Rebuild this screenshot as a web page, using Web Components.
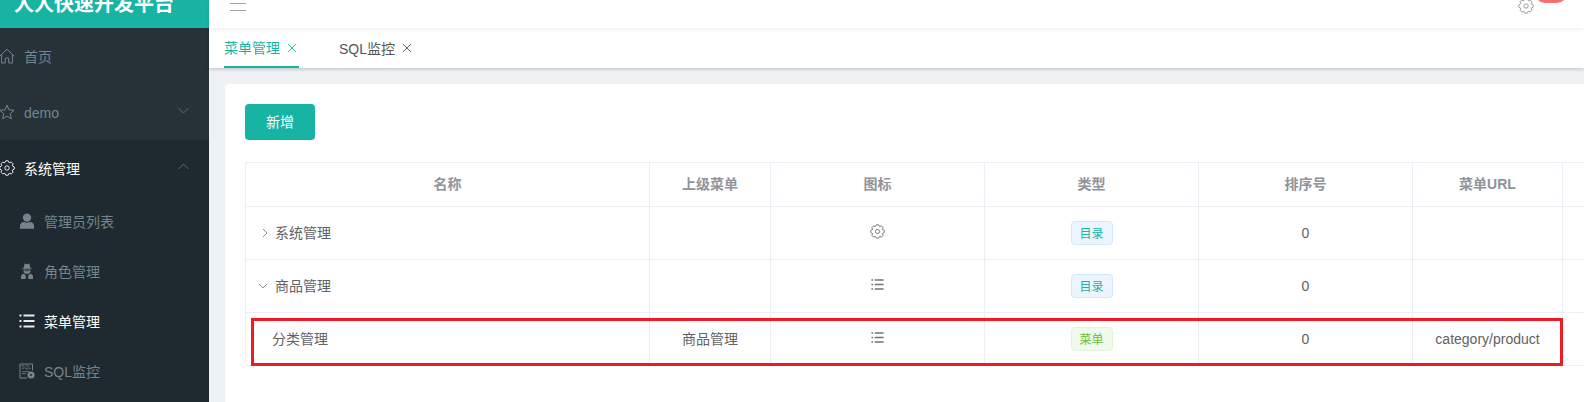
<!DOCTYPE html>
<html>
<head>
<meta charset="utf-8">
<style>
    html, body { margin: 0; height: 100%; overflow: hidden; background: #fff; }
    body { font-family: "Liberation Sans", "Noto Sans CJK SC", sans-serif; font-size: 14px; }
</style>
</head>
<body>
<app-shell>
    <side-nav slot="side">
        <nav-item icon="home" top>首页</nav-item>
        <nav-item icon="star" arrow="down" top chevron latin>demo</nav-item>
        <nav-group>
            <nav-item icon="gear" arrow="up" top chevron active>系统管理</nav-item>
            <nav-item icon="user">管理员列表</nav-item>
            <nav-item icon="spy">角色管理</nav-item>
            <nav-item icon="list" active>菜单管理</nav-item>
            <nav-item icon="sql">SQL监控</nav-item>
        </nav-group>
    </side-nav>
    <top-bar slot="top"></top-bar>
    <tab-bar slot="tabs">
        <tab-item active>菜单管理</tab-item>
        <tab-item>SQL监控</tab-item>
    </tab-bar>
    <content-card slot="main">
        <add-button>新增</add-button>
        <menu-table></menu-table>
    </content-card>
</app-shell>

<script>
function gearPath() {
    // eight soft lobes round a 16 box
    let d = '';
    const pt = (r, a) => (8 + r * Math.cos(a)).toFixed(2) + ' ' + (8 + r * Math.sin(a)).toFixed(2);
    for (let i = 0; i < 8; i++) {
        const a = (i * Math.PI) / 4 - Math.PI / 8;
        const step = Math.PI / 4;
        if (i === 0) d += 'M' + pt(5.7, a);
        d += ' L' + pt(7.3, a + step * 0.3) + ' L' + pt(7.3, a + step * 0.7) + ' L' + pt(5.7, a + step);
    }
    return d + 'Z';
}

const ICONS = {
    home: '<path d="M.8 8 8 1.2 15.2 8M2.6 6.6V15H6.3V10H9.7V15H13.4V6.6" fill="none" stroke="currentColor"/>',
    star: '<path d="M8 1.2 10 5.8 15 6.3 11.2 9.7 12.3 14.8 8 12.1 3.7 14.8 4.8 9.7 1 6.3 6 5.8Z" fill="none" stroke="currentColor"/>',
    gear: '<path d="' + gearPath() + '" fill="none" stroke="currentColor" stroke-linejoin="round"/><circle cx="8" cy="8" r="2.2" fill="none" stroke="currentColor"/>',
    user: '<circle cx="8" cy="4.6" r="4.2" fill="currentColor"/><path d="M1 15.8V12.6C1 10.4 3 9 5 8.9 6.7 10 9.3 10 11 8.9 13 9 15 10.4 15 12.6V15.8Z" fill="currentColor"/>',
    spy: '<path d="M4.8 4.6 5.6 .6 8 1.3 10.4 .6 11.2 4.6 13.4 5.8H2.6Z" fill="currentColor"/><path d="M4.6 6.6H11.4V8.6C11.4 10 10 11 8 11S4.6 10 4.6 8.6Z" fill="currentColor"/><path d="M2 16V13.4C2 12 3.4 11 5 10.8L7 13 6.5 16ZM14 16V13.4C14 12 12.6 11 11 10.8L9 13 9.5 16Z" fill="currentColor"/><path d="M5.6 7.6H10.4" stroke="#1f2a30" stroke-width=".8"/>',
    list: '<path d="M.5 2.5H2.5M4.5 2.5H15.5M.5 8H2.5M4.5 8H15.5M.5 13.5H2.5M4.5 13.5H15.5" stroke="currentColor" stroke-width="2"/>',
    sql: '<path d="M13.5 7.5V1H1V15H8" fill="none" stroke="currentColor"/><path d="M3 8.6H10.5M3 10.6H7" stroke="currentColor" stroke-width=".8"/><text x="2.6" y="6.4" font-size="4.6" font-family="Liberation Sans" fill="currentColor">SQL</text><circle cx="12" cy="12" r="3.6" fill="currentColor"/><circle cx="12" cy="12" r="1" fill="#1f2a30"/>'
};

class UiIcon extends HTMLElement {
    constructor() {
        super();
        const size = this.getAttribute('size') || 16;
        this.attachShadow({ mode: 'open' }).innerHTML = `
            <style>:host { display: inline-flex; flex: none; } svg { display: block; }</style>
            <svg width="${size}" height="${size}" viewBox="0 0 16 16">${ICONS[this.getAttribute('name')]}</svg>`;
    }
}
customElements.define('ui-icon', UiIcon);

const shellTemplate = document.createElement('template');
shellTemplate.innerHTML = `
<style>
    :host {
        display: grid;
        grid-template-columns: 209px 1fr;
        grid-template-rows: 28px 40px 1fr;
        height: 402px;
        overflow: hidden;
        background: #eef2f4;
    }
    .side { grid-row: 1 / 4; min-height: 0; }
    .top { position: relative; z-index: 2; box-shadow: 0 2px 4px rgba(0, 0, 0, .06); }
    .tabs { position: relative; z-index: 1; box-shadow: 0 1px 4px rgba(0, 0, 0, .22); }
    .main { min-width: 0; min-height: 0; padding: 16px 0 0 16px; }
</style>
<div class="side"><slot name="side"></slot></div>
<div class="top"><slot name="top"></slot></div>
<div class="tabs"><slot name="tabs"></slot></div>
<div class="main"><slot name="main"></slot></div>
`;
class AppShell extends HTMLElement {
    constructor() {
        super();
        this.attachShadow({ mode: 'open' }).append(shellTemplate.content.cloneNode(true));
    }
}
customElements.define('app-shell', AppShell);

const sideTemplate = document.createElement('template');
sideTemplate.innerHTML = `
<style>
    :host { display: flex; flex-direction: column; height: 100%; background: #263238; }
    .logo {
        height: 28px;
        flex: none;
        overflow: hidden;
        background: #17b3a3;
        color: #fff;
        font-size: 20px;
        font-weight: bold;
        line-height: 20px;
        padding-left: 14px;
        box-sizing: border-box;
    }
    .logo span { display: block; margin-top: -6px; white-space: nowrap; }
</style>
<div class="logo"><span>人人快速开发平台</span></div>
<slot></slot>
`;
class SideNav extends HTMLElement {
    constructor() {
        super();
        this.attachShadow({ mode: 'open' }).append(sideTemplate.content.cloneNode(true));
    }
}
customElements.define('side-nav', SideNav);

class NavGroup extends HTMLElement {
    constructor() {
        super();
        this.attachShadow({ mode: 'open' }).innerHTML = `
            <style>:host { display: block; flex: 1; background: #1f2a30; }</style><slot></slot>`;
    }
}
customElements.define('nav-group', NavGroup);

class NavItem extends HTMLElement {
    constructor() {
        super();
        const chevron = this.hasAttribute('chevron');
        const up = this.getAttribute('arrow') === 'up';
        this.attachShadow({ mode: 'open' }).innerHTML = `
            <style>
                :host {
                    display: flex;
                    align-items: center;
                    height: 50px;
                    padding-left: 20px;
                    color: #75838b;
                    font-size: 14px;
                }
                :host([top]) { height: 56px; padding-left: 0; }
                :host([active]) { color: #fff; }
                .icon { display: flex; width: 24px; flex: none; color: #75838b; }
                .icon ui-icon { margin-left: -1px; }
                :host([active]) .icon { color: #e8eaeb; }
                .label { flex: 1; }
                :host([latin]) .label { padding-top: 2px; }
                .chev { margin: -4px 20px 0 0; color: #5d6a72; }
            </style>
            <span class="icon"><ui-icon name="${this.getAttribute('icon')}" size="16"></ui-icon></span>
            <span class="label"><slot></slot></span>
            ${chevron ? `<svg class="chev" width="11" height="7" viewBox="0 0 11 7"><path d="${up ? 'M.5 6 5.5 1 10.5 6' : 'M.5 1 5.5 6 10.5 1'}" fill="none" stroke="currentColor"/></svg>` : ''}`;
    }
}
customElements.define('nav-item', NavItem);

class TopBar extends HTMLElement {
    constructor() {
        super();
        this.attachShadow({ mode: 'open' }).innerHTML = `
            <style>
                :host {
                    display: flex;
                    justify-content: space-between;
                    height: 28px;
                    overflow: hidden;
                    background: #fff;
                    position: relative;
                }
                .burger { display: block; margin-left: 21px; }
                .gear { margin: -2px 50px 0 0; color: #9a9ea3; height: 16px; }
                .badge {
                    position: absolute;
                    right: 17px;
                    top: -17px;
                    width: 32px;
                    height: 20px;
                    border-radius: 10px;
                    background: #f76f6f;
                }
            </style>
            <svg class="burger" width="16" height="14" viewBox="0 0 16 14"><path d="M0 3.5H16M0 10.5H16" stroke="#a3a6aa" stroke-width="1.2"/></svg>
            <ui-icon class="gear" name="gear" size="16"></ui-icon>
            <span class="badge"></span>`;
    }
}
customElements.define('top-bar', TopBar);

class TabBar extends HTMLElement {
    constructor() {
        super();
        this.attachShadow({ mode: 'open' }).innerHTML = `
            <style>
                :host { display: flex; height: 40px; padding-left: 15px; gap: 40px; background: #fff; }
            </style><slot></slot>`;
    }
}
customElements.define('tab-bar', TabBar);

class TabItem extends HTMLElement {
    constructor() {
        super();
        this.attachShadow({ mode: 'open' }).innerHTML = `
            <style>
                :host {
                    display: flex;
                    align-items: center;
                    gap: 7px;
                    height: 40px;
                    box-sizing: border-box;
                    color: #555;
                    font-size: 14px;
                }
                :host([active]) { color: #17b3a3; border-bottom: 2px solid #17b3a3; padding-right: 0; width: 75px; }
                svg { display: block; margin-top: -1px; }
                :host([active]) svg { margin-top: 1px; }
            </style>
            <slot></slot>
            <svg width="10" height="10" viewBox="0 0 10 10"><path d="M1 1 9 9M9 1 1 9" fill="none" stroke="currentColor" stroke-width=".9"/></svg>`;
    }
}
customElements.define('tab-item', TabItem);

class ContentCard extends HTMLElement {
    constructor() {
        super();
        this.attachShadow({ mode: 'open' }).innerHTML = `
            <style>
                :host {
                    display: block;
                    height: 100%;
                    box-sizing: border-box;
                    padding: 20px 0 0 20px;
                    background: #fff;
                    border-radius: 4px 0 0 0;
                }
            </style><slot></slot>`;
    }
}
customElements.define('content-card', ContentCard);

class AddButton extends HTMLElement {
    constructor() {
        super();
        this.attachShadow({ mode: 'open' }).innerHTML = `
            <style>
                :host {
                    display: flex;
                    align-items: center;
                    justify-content: center;
                    width: 70px;
                    height: 36px;
                    box-sizing: border-box;
                    padding-bottom: 2px;
                    border-radius: 4px;
                    background: #17b3a3;
                    color: #fff;
                    font-size: 14px;
                    margin-bottom: 22px;
                }
            </style><slot></slot>`;
    }
}
customElements.define('add-button', AddButton);

class StatusTag extends HTMLElement {
    constructor() {
        super();
        this.attachShadow({ mode: 'open' }).innerHTML = `
            <style>
                :host {
                    display: inline-flex;
                    align-items: center;
                    justify-content: center;
                    width: 42px;
                    height: 24px;
                    box-sizing: border-box;
                    padding-bottom: 2px;
                    border: 1px solid #d1e8ff;
                    border-radius: 4px;
                    background: #ecf5ff;
                    color: #17b3a3;
                    font-size: 12px;
                }
                :host([kind="success"]) { border-color: #e1f3d8; background: #f0f9eb; color: #67c23a; }
            </style><slot></slot>`;
    }
}
customElements.define('status-tag', StatusTag);

const tableTemplate = document.createElement('template');
tableTemplate.innerHTML = `
<style>
    :host {
        display: block;
        position: relative;
        border-left: 1px solid #ebeef5;
        border-top: 1px solid #ebeef5;
        color: #606266;
        font-size: 14px;
    }
    .row {
        display: grid;
        grid-template-columns: 404px 121px 214px 214px 214px 150px 60px;
        height: 53px;
    }
    .head { height: 44px; color: #909399; font-weight: bold; }
    .cell {
        display: flex;
        align-items: center;
        justify-content: center;
        box-sizing: border-box;
        border-right: 1px solid #ebeef5;
        border-bottom: 1px solid #ebeef5;
    }
    .head .cell { padding-bottom: 4px; }
    .zh { padding-bottom: 2px; }
    .name { justify-content: flex-start; }
    .arrow { flex: none; color: #8b9096; margin-top: 2px; }
    .r1 { padding-left: 16px; gap: 7px; }
    .r2 { padding-left: 12px; gap: 7px; }
    .r3 { padding-left: 26px; }
    .glyph { color: #6f7276; margin-top: -4px; }
    .mark {
        position: absolute;
        left: 5px;
        top: 155px;
        width: 1312px;
        height: 48px;
        box-sizing: border-box;
        border: 3px solid #ed1c24;
    }
</style>
<div class="row head">
    <div class="cell">名称</div><div class="cell">上级菜单</div><div class="cell">图标</div>
    <div class="cell">类型</div><div class="cell">排序号</div><div class="cell">菜单URL</div><div class="cell"></div>
</div>
<div class="row">
    <div class="cell name zh r1"><svg class="arrow" width="6" height="10" viewBox="0 0 6 10"><path d="M1 1 5 5 1 9" fill="none" stroke="currentColor"/></svg>系统管理</div>
    <div class="cell"></div>
    <div class="cell"><ui-icon class="glyph" name="gear" size="15"></ui-icon></div>
    <div class="cell"><status-tag>目录</status-tag></div>
    <div class="cell">0</div><div class="cell"></div><div class="cell"></div>
</div>
<div class="row">
    <div class="cell name zh r2"><svg class="arrow" width="10" height="6" viewBox="0 0 10 6"><path d="M1 1 5 5 9 1" fill="none" stroke="currentColor"/></svg>商品管理</div>
    <div class="cell"></div>
    <div class="cell"><ui-icon class="glyph" name="list" size="13"></ui-icon></div>
    <div class="cell"><status-tag>目录</status-tag></div>
    <div class="cell">0</div><div class="cell"></div><div class="cell"></div>
</div>
<div class="row">
    <div class="cell name zh r3">分类管理</div>
    <div class="cell zh">商品管理</div>
    <div class="cell"><ui-icon class="glyph" name="list" size="13"></ui-icon></div>
    <div class="cell"><status-tag kind="success">菜单</status-tag></div>
    <div class="cell">0</div><div class="cell">category/product</div><div class="cell"></div>
</div>
<div class="mark"></div>
`;
class MenuTable extends HTMLElement {
    constructor() {
        super();
        this.attachShadow({ mode: 'open' }).append(tableTemplate.content.cloneNode(true));
    }
}
customElements.define('menu-table', MenuTable);
</script>
</body>
</html>
